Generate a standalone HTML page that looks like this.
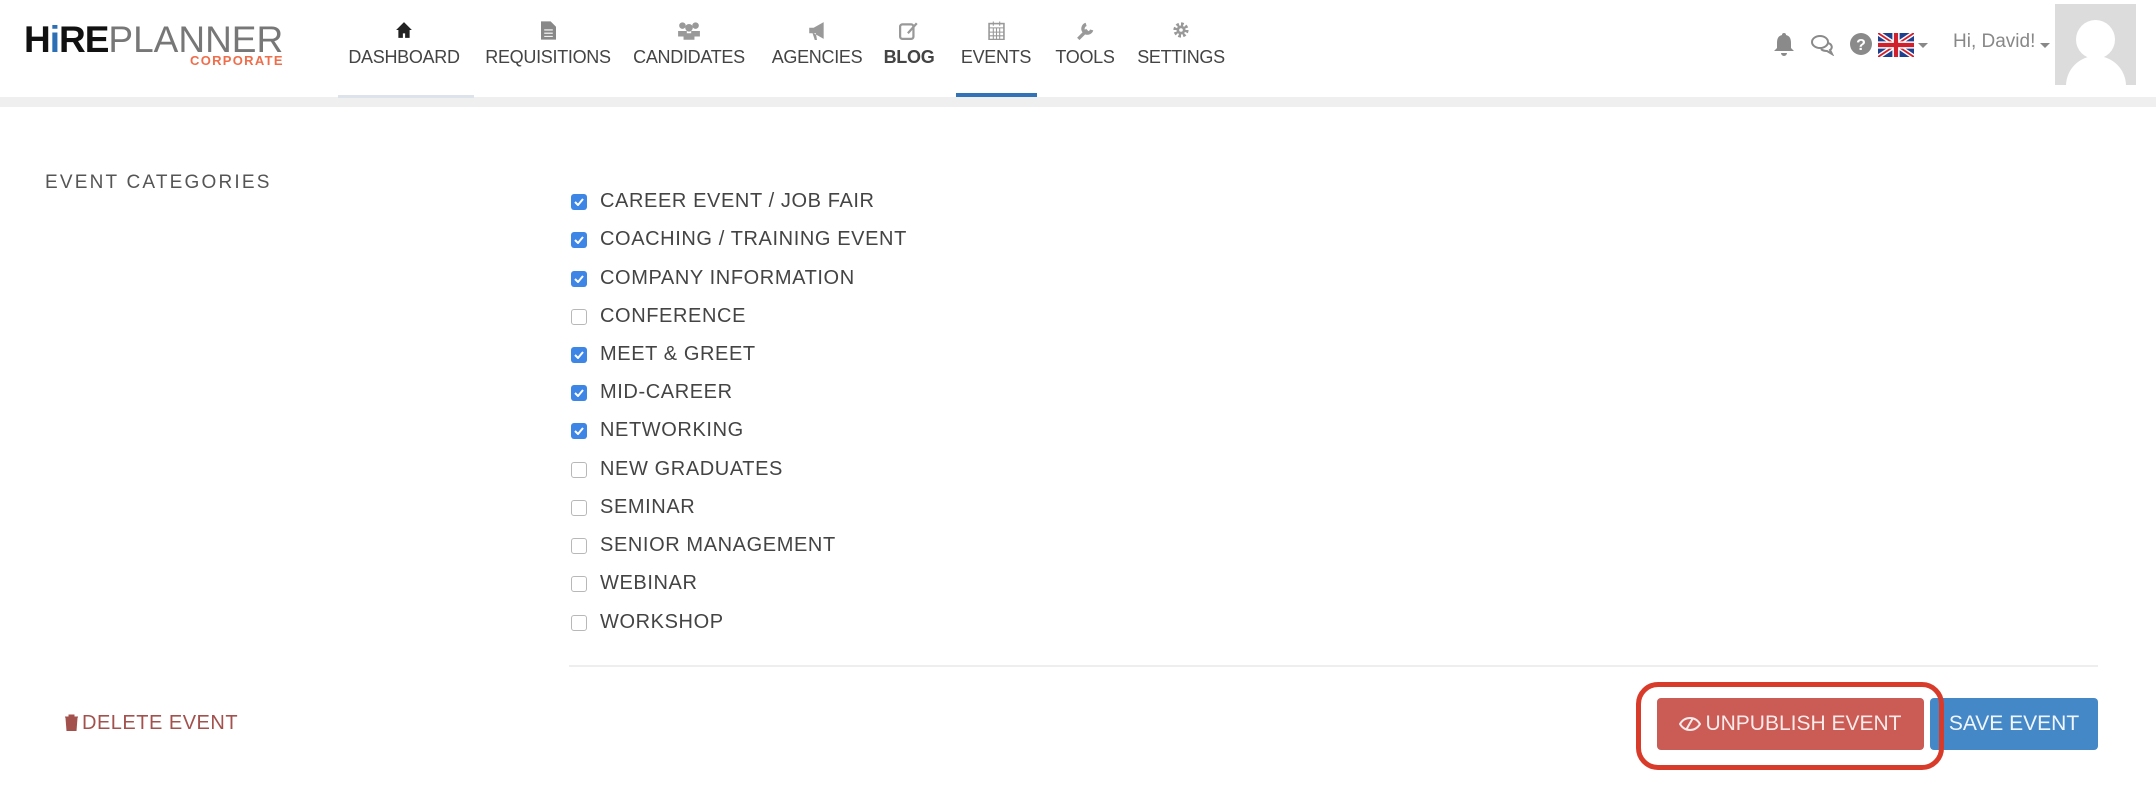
<!DOCTYPE html>
<html><head><meta charset="utf-8"><style>
*{margin:0;padding:0;box-sizing:border-box}
body{width:2156px;height:794px;background:#fff;font-family:"Liberation Sans",sans-serif;position:relative;overflow:hidden;color:#444}
.abs{position:absolute}
.hdr{left:0;top:0;width:2156px;height:98px;background:#fff}
.band{left:0;top:97px;width:2156px;height:10px;background:#efefef}
.nav{top:0;height:97px;text-align:center;font-size:18px;color:#444;white-space:nowrap}
.nav .ic{position:absolute;top:21px;left:0;right:0;height:20px;display:flex;justify-content:center}
.nav .t{position:absolute;top:47px;left:0;right:0;letter-spacing:-0.3px}
.cat{left:571px;font-size:20px;letter-spacing:0.6px;color:#444;white-space:nowrap;display:flex;align-items:center}
.cb{width:16px;height:16px;border-radius:3px;margin-right:13px;flex:none}
.on{background:#3d86e6;display:flex;align-items:center;justify-content:center}
.off{border:1px solid #b8b8b8;background:#fff}
</style></head><body>
<div class="abs hdr"></div>
<div class="abs band"></div>
<div class="abs" style="left:338px;top:95px;width:136px;height:3px;background:#dde3ea"></div>
<div class="abs" style="left:956px;top:93px;width:81px;height:4px;background:#3273b8"></div>
<!-- logo -->
<div class="abs" style="left:24px;top:20px;font-size:37px;line-height:40px;letter-spacing:-1px;white-space:nowrap"><span style="font-weight:bold;color:#111">H<span style="color:#2d6fb5">i</span>RE</span><span style="color:#777;font-weight:normal;letter-spacing:0">PLANNER</span></div>
<div class="abs" style="left:190px;top:53px;font-size:13px;font-weight:bold;color:#ef6d4a;letter-spacing:1.3px">CORPORATE</div>
<!-- nav -->
<div class="abs nav" style="left:340px;width:128px"><div class="ic"><svg width="18" height="18" viewBox="0 0 16 16"><path d="M8 1L1 8h2v7h4v-4h2v4h4V8h2z" fill="#222"/></svg></div><div class="t">DASHBOARD</div></div>
<div class="abs nav" style="left:480px;width:136px"><div class="ic"><svg width="15" height="19" viewBox="0 0 14 17"><path d="M0 0h9l5 5v12H0z" fill="#888"/><path d="M3 8h8M3 11h8M3 14h8" stroke="#fff"/></svg></div><div class="t">REQUISITIONS</div></div>
<div class="abs nav" style="left:630px;width:118px"><div class="ic"><svg width="24" height="19" viewBox="0 0 22 17"><circle cx="5" cy="4" r="3" fill="#999"/><circle cx="17" cy="4" r="3" fill="#999"/><circle cx="11" cy="6" r="3.5" fill="#999"/><path d="M1 14v-5h8v5zM13 14v-5h8v5zM6 17v-6h10v6z" fill="#999"/></svg></div><div class="t">CANDIDATES</div></div>
<div class="abs nav" style="left:768px;width:98px"><div class="ic"><svg width="20" height="19" viewBox="0 0 18 17"><path d="M2 6h4l9-5v15l-9-5H2z M5 11l2 6h2l-1-6" fill="#999"/></svg></div><div class="t">AGENCIES</div></div>
<div class="abs nav" style="left:880px;width:58px;font-weight:bold"><div class="ic"><svg width="20" height="19" viewBox="0 0 18 17"><rect x="1" y="3" width="12" height="13" rx="2" fill="none" stroke="#999" stroke-width="2"/><path d="M8 11l8-9" stroke="#999" stroke-width="2"/></svg></div><div class="t">BLOG</div></div>
<div class="abs nav" style="left:955px;width:82px"><div class="ic"><svg width="17" height="19" viewBox="0 0 16 17"><rect x="1" y="2" width="14" height="15" fill="none" stroke="#999" stroke-width="1.5"/><path d="M1 6h14M5 0v4M11 0v4M1 10h14M1 13.5h14M5 6v11M8 6v11M11 6v11" stroke="#999"/></svg></div><div class="t">EVENTS</div></div>
<div class="abs nav" style="left:1050px;width:70px"><div class="ic"><svg width="18" height="19" viewBox="0 0 16 17"><path d="M2 16l8-8M9 3a4 4 0 1 0 5 5" stroke="#999" stroke-width="3" fill="none"/></svg></div><div class="t">TOOLS</div></div>
<div class="abs nav" style="left:1136px;width:90px"><div class="ic"><svg width="18" height="18" viewBox="0 0 16 16"><circle cx="8" cy="8" r="5" fill="none" stroke="#999" stroke-width="3.5" stroke-dasharray="2.2 1.7"/><circle cx="8" cy="8" r="4" fill="#999"/><circle cx="8" cy="8" r="1.6" fill="#fff"/></svg></div><div class="t">SETTINGS</div></div>
<!-- right icons -->
<svg class="abs" style="left:1772px;top:32px" width="24" height="26" viewBox="0 0 24 26"><path d="M12 1a2 2 0 0 1 2 2c4 1 5 4 5 8v5l3 3H2l3-3v-5c0-4 1-7 5-8a2 2 0 0 1 2-2zM9 21h6a3 3 0 0 1-6 0z" fill="#8a8a8a"/></svg>
<svg class="abs" style="left:1810px;top:34px" width="26" height="22" viewBox="0 0 26 22"><ellipse cx="10" cy="8" rx="8" ry="6" fill="none" stroke="#8a8a8a" stroke-width="2"/><path d="M18 9c4 1 5 5 2 7l2 4-5-3c-3 0-5-1-6-2" fill="none" stroke="#8a8a8a" stroke-width="2"/></svg>
<svg class="abs" style="left:1850px;top:33px" width="22" height="22" viewBox="0 0 22 22"><circle cx="11" cy="11" r="11" fill="#8a8a8a"/><text x="11" y="17" text-anchor="middle" font-family="Liberation Sans" font-weight="bold" font-size="16" fill="#fff">?</text></svg>
<svg class="abs" style="left:1878px;top:33px" width="36" height="24" viewBox="0 0 60 40"><rect width="60" height="40" fill="#1f3f8f"/><path d="M0 0L60 40M60 0L0 40" stroke="#fff" stroke-width="8"/><path d="M0 0L60 40M60 0L0 40" stroke="#d0202e" stroke-width="3"/><path d="M30 0v40M0 20h60" stroke="#fff" stroke-width="12"/><path d="M30 0v40M0 20h60" stroke="#d0202e" stroke-width="7"/></svg>
<div class="abs" style="left:1918px;top:43px;border:5px solid transparent;border-top-color:#888"></div>
<div class="abs" style="left:1953px;top:31px;font-size:19px;color:#888">Hi, David!</div>
<div class="abs" style="left:2040px;top:43px;border:5px solid transparent;border-top-color:#888"></div>
<div class="abs" style="left:2055px;top:4px;width:81px;height:81px;background:#dcdcdc;overflow:hidden"><div class="abs" style="left:21px;top:16px;width:39px;height:39px;border-radius:50%;background:#fff"></div><div class="abs" style="left:11px;top:52px;width:60px;height:60px;border-radius:50% 50% 0 0;background:#fff"></div></div>
<!-- content -->
<div class="abs" style="left:45px;top:172px;font-size:19px;letter-spacing:2.2px;color:#555">EVENT CATEGORIES</div>
<div class="abs cat" style="top:190px"><span class="cb on"><svg width="10" height="8" viewBox="0 0 10 8"><path d="M1 4l3 3 5-6" stroke="#fff" stroke-width="2" fill="none"/></svg></span>CAREER EVENT / JOB FAIR</div>
<div class="abs cat" style="top:228px"><span class="cb on"><svg width="10" height="8" viewBox="0 0 10 8"><path d="M1 4l3 3 5-6" stroke="#fff" stroke-width="2" fill="none"/></svg></span>COACHING / TRAINING EVENT</div>
<div class="abs cat" style="top:267px"><span class="cb on"><svg width="10" height="8" viewBox="0 0 10 8"><path d="M1 4l3 3 5-6" stroke="#fff" stroke-width="2" fill="none"/></svg></span>COMPANY INFORMATION</div>
<div class="abs cat" style="top:305px"><span class="cb off"></span>CONFERENCE</div>
<div class="abs cat" style="top:343px"><span class="cb on"><svg width="10" height="8" viewBox="0 0 10 8"><path d="M1 4l3 3 5-6" stroke="#fff" stroke-width="2" fill="none"/></svg></span>MEET &amp; GREET</div>
<div class="abs cat" style="top:381px"><span class="cb on"><svg width="10" height="8" viewBox="0 0 10 8"><path d="M1 4l3 3 5-6" stroke="#fff" stroke-width="2" fill="none"/></svg></span>MID-CAREER</div>
<div class="abs cat" style="top:419px"><span class="cb on"><svg width="10" height="8" viewBox="0 0 10 8"><path d="M1 4l3 3 5-6" stroke="#fff" stroke-width="2" fill="none"/></svg></span>NETWORKING</div>
<div class="abs cat" style="top:458px"><span class="cb off"></span>NEW GRADUATES</div>
<div class="abs cat" style="top:496px"><span class="cb off"></span>SEMINAR</div>
<div class="abs cat" style="top:534px"><span class="cb off"></span>SENIOR MANAGEMENT</div>
<div class="abs cat" style="top:572px"><span class="cb off"></span>WEBINAR</div>
<div class="abs cat" style="top:611px"><span class="cb off"></span>WORKSHOP</div>
<div class="abs" style="left:569px;top:665px;width:1529px;height:2px;background:#eee"></div>
<div class="abs" style="left:64px;top:712px;font-size:20px;letter-spacing:0.5px;color:#a3514d;white-space:nowrap"><svg width="15" height="17" viewBox="0 0 15 17" style="vertical-align:-2px;margin-right:3px"><path d="M1 3h13M5 3V1h5v2M2 4h11l-1 13H3z" fill="#a3514d" stroke="#a3514d"/></svg>DELETE EVENT</div>
<div class="abs" style="left:1657px;top:698px;width:267px;height:52px;background:#cb5b55;border-radius:4px;color:#fbeaea;font-size:21px;display:flex;align-items:center;justify-content:center;white-space:nowrap"><svg width="22" height="14" viewBox="0 0 22 14" style="margin-right:4px"><path d="M1 7c3-5 7-6 10-6s7 1 10 6c-3 5-7 6-10 6S4 12 1 7z" fill="none" stroke="#fbeaea" stroke-width="2"/><path d="M7 13L14 1" stroke="#fbeaea" stroke-width="2"/></svg>UNPUBLISH EVENT</div>
<div class="abs" style="left:1930px;top:698px;width:168px;height:52px;background:#4488c8;border-radius:4px;color:#f0f6fc;font-size:21px;display:flex;align-items:center;justify-content:center;white-space:nowrap">SAVE EVENT</div>
<div class="abs" style="left:1636px;top:682px;width:308px;height:88px;border:5px solid #d93b2a;border-radius:22px"></div>
</body></html>
